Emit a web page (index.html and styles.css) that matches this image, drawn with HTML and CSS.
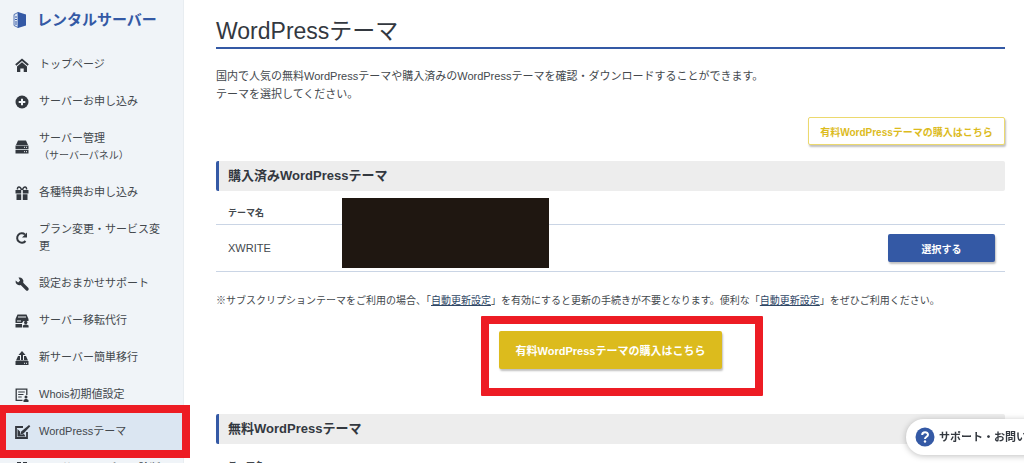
FILE: index.html
```html
<!DOCTYPE html>
<html lang="ja">
<head>
  <meta charset="UTF-8" />
  <meta name="viewport" content="width=device-width, initial-scale=1.0" />
  <title>WordPressテーマ</title>
  <link rel="stylesheet" href="styles.css">
</head>
<body>
  <div class="layout">
    <aside class="sidebar">
      <a class="logo" href="#">
        <svg width="14" height="16" viewBox="0 0 14 16"><path fill="#3459a5" d="M5 0l8 2.500v11L5 16z"/><path fill="#dfe8f5" stroke="#3459a5" stroke-width=".8" d="M1 2.500L5 .5v15l-4-2z"/><path stroke="#3459a5" d="M2 5h2M2 7.500h2M2 10h2M2 12h2"/></svg>
        <span>レンタルサーバー</span>
      </a>
      <nav class="menu">
        <a class="menu-item" href="#">
          <svg class="icon" viewBox="0 0 14 14"><path fill="none" stroke="currentColor" stroke-width="1.800" d="M.8 7L7 1.700 13.200 7"/><path fill="currentColor" d="M7 4.200l5 4.200V14H8.700v-3.500H5.300V14H2V8.400z"/></svg>
          <span>トップページ</span>
        </a>
        <a class="menu-item" href="#">
          <svg class="icon" viewBox="0 0 14 14"><circle cx="7" cy="7" r="6.500" fill="currentColor"/><path stroke="#f0f4f8" stroke-width="2" d="M7 3.700v6.600M3.700 7h6.600"/></svg>
          <span>サーバーお申し込み</span>
        </a>
        <a class="menu-item" href="#">
          <svg class="icon" viewBox="0 0 14 14"><path fill="currentColor" d="M3 .5h8l2 4.500H1zM.5 5.500h13v3.700H.5zM.5 10h13v3.500H.5z"/><path stroke="#f0f4f8" d="M9 7.300h1M11 7.300h1M9 11.700h1M11 11.700h1"/></svg>
          <span>サーバー管理<br><small>（サーバーパネル）</small></span>
        </a>
        <a class="menu-item" href="#">
          <svg class="icon" viewBox="0 0 14 14"><path fill="currentColor" d="M.5 4h5.700v3.500H.5zM7.800 4h5.700v3.500H7.800zM1.500 8.300h4.700V14H1.500zM7.800 8.300h4.700V14H7.800z"/><path fill="none" stroke="currentColor" stroke-width="1.500" d="M6.500 4C5.500 0 2 .3 2.500 3.500M7.500 4c1-4 4.500-3.700 4-.5"/></svg>
          <span>各種特典お申し込み</span>
        </a>
        <a class="menu-item" href="#">
          <svg class="icon" viewBox="0 0 14 14"><path fill="none" stroke="currentColor" stroke-width="2" d="M10 3.500A4.700 4.700 0 1 0 10.500 10"/><path fill="currentColor" d="M12 1.500v5H7z"/></svg>
          <span>プラン変更・サービス変更</span>
        </a>
        <a class="menu-item" href="#">
          <svg class="icon" viewBox="0 0 14 14"><path fill="currentColor" d="M3.500.6a4 4 0 0 1 4.700 5.200l5 5a1.600 1.600 0 0 1-2.300 2.400L5.700 8A4 4 0 0 1 .6 3.500l2.500 2 2-1.900z"/></svg>
          <span>設定おまかせサポート</span>
        </a>
        <a class="menu-item" href="#">
          <svg class="icon" viewBox="0 0 14 14"><path fill="currentColor" d="M2.500.5h9l2 4.500v2h-5L7 9H.5V5zM.5 10H7v3.500H.5z"/><path stroke="#f0f4f8" d="M3 3h8M2 7h4"/><circle cx="10.700" cy="8.500" r="1.700" fill="currentColor"/><path fill="currentColor" d="M7.800 13.500v-2l2-1h1.800l2 1v2z"/></svg>
          <span>サーバー移転代行</span>
        </a>
        <a class="menu-item" href="#">
          <svg class="icon" viewBox="0 0 14 14"><path fill="currentColor" d="M7 0l3.500 4H8v5H6V4H3.500zM3 5h2v5h4V5h2l2 4.500H1zM.5 10h13v4H.5z"/><path stroke="#f0f4f8" d="M9 12.300h1M11 12.300h1"/></svg>
          <span>新サーバー簡単移行</span>
        </a>
        <a class="menu-item" href="#">
          <svg class="icon" viewBox="0 0 14 14"><path fill="none" stroke="currentColor" stroke-width="1.300" d="M7.500 12.300H1.200V1.200h10.600V7"/><path stroke="currentColor" d="M3.200 4h6.600M3.200 6.500h5.300M3.200 9h3.500"/><circle cx="11" cy="9" r="1.500" fill="currentColor"/><path fill="currentColor" d="M8.500 14v-2l1.700-1h1.600l1.700 1v2z"/></svg>
          <span>Whois初期値設定</span>
        </a>
        <a class="menu-item active" href="#">
          <svg class="icon" viewBox="0 0 14 14"><path fill="none" stroke="currentColor" stroke-width="1.800" d="M8 2H1v11h11V7"/><path fill="currentColor" d="M14 0l1.300 1.300L8.500 8.500 5 10l1.200-3.500z"/><path fill="currentColor" d="M2.500 4L5 6.500V10l4-1 1.500 2.500h-8z"/></svg>
          <span>WordPressテーマ</span>
        </a>
        <a class="menu-item" href="#">
          <svg class="icon" viewBox="0 0 14 14"><path fill="currentColor" d="M2 0h4v6H2zM8 0h4v6H8zM1 7h12v6H1z"/></svg>
          <span>Webサイトスピード診断</span>
        </a>
      </nav>
    </aside>

    <main class="content">
      <h1>WordPressテーマ</h1>
      <p class="lead">国内で人気の無料WordPressテーマや購入済みのWordPressテーマを確認・ダウンロードすることができます。<br>テーマを選択してください。</p>
      <div class="buy-top">
        <button type="button" class="btn btn-outline">有料WordPressテーマの購入はこちら</button>
      </div>

      <h2>購入済みWordPressテーマ</h2>
      <div class="table-wrap">
        <table>
          <thead>
            <tr><th>テーマ名</th><th></th></tr>
          </thead>
          <tbody>
            <tr>
              <td>XWRITE</td>
              <td class="action"><button type="button" class="btn btn-blue">選択する</button></td>
            </tr>
          </tbody>
        </table>
        <div class="masked"></div>
      </div>
      <p class="note">※サブスクリプションテーマをご利用の場合、「<a href="#">自動更新設定</a>」を有効にすると更新の手続きが不要となります。便利な「<a href="#">自動更新設定</a>」をぜひご利用ください。</p>
      <div class="buy-main">
        <div class="highlight">
          <button type="button" class="btn btn-gold">有料WordPressテーマの購入はこちら</button>
        </div>
      </div>

      <h2>無料WordPressテーマ</h2>
      <table>
        <thead>
          <tr><th>テーマ名</th></tr>
        </thead>
      </table>
    </main>
  </div>

  <a class="support" href="#">
    <svg width="20" height="20" viewBox="0 0 20 20"><circle cx="10" cy="10" r="9.500" fill="#3459a5"/><path fill="none" stroke="#fff" stroke-width="2" d="M7.200 8c0-3.700 5.800-3.500 5.800-.3C13 9.700 10 9.800 10 12"/><circle cx="10" cy="14.500" r="1.200" fill="#fff"/></svg>
    <span>サポート・お問い合わせ</span>
  </a>
</body>
</html>
```
FILE: styles.css
```css
* {
  box-sizing: border-box;
}
body {
  margin: 0;
  height: 100vh;
  overflow: hidden;
  font-family: "Liberation Sans", "Noto Sans CJK JP", sans-serif;
  font-size: 11px;
  line-height: 18px;
  color: #43484d;
  background-color: #fff;
}
.layout {
  display: flex;
  min-height: 100vh;
}

/* sidebar */
.sidebar {
  flex: 0 0 184px;
  background-color: #f0f4f8;
  border-right: 1px solid #e8edf1;
}
.logo {
  display: flex;
  align-items: center;
  gap: 10px;
  height: 46px;
  padding: 0 0 7px 13px;
  color: #3459a5;
  font-size: 15px;
  font-weight: bold;
  text-decoration: none;
}
.menu-item {
  position: relative;
  display: flex;
  align-items: center;
  gap: 10px;
  padding: 10px 16px 10px 15px;
  color: #43484d;
  line-height: 17px;
  text-decoration: none;
}
.menu-item small {
  font-size: 10px;
}
.icon {
  flex: none;
  width: 14px;
  height: 14px;
  color: #33383f;
  overflow: visible;
}
.active {
  background-color: #dbe6f2;
}
.active::after {
  content: "";
  position: absolute;
  z-index: 2;
  inset: -8px -7px -8px -2px;
  border: 8px solid #ed1c24;
}

/* main column */
.content {
  flex: 1;
  min-width: 0;
  padding: 15px 19px 0 32px;
}
h1 {
  margin: 0;
  border-bottom: 2px solid #3459a5;
  color: #33383f;
  font-size: 23px;
  font-weight: normal;
  line-height: 32px;
}
.lead {
  margin: 18px 0 14px;
}
.buy-top {
  display: flex;
  justify-content: flex-end;
  margin-bottom: 16px;
}
h2 {
  margin: 0;
  padding-left: 9px;
  border-left: 3px solid #3459a5;
  border-radius: 2px;
  background-color: #ededed;
  color: #33383f;
  font-size: 13px;
  line-height: 30px;
}
.table-wrap {
  position: relative;
}
table {
  width: 100%;
  margin-top: 10px;
  border-collapse: separate;
  border-spacing: 0;
}
th,
td {
  padding: 0 12px;
  border-bottom: 1px solid #cad5e5;
  text-align: left;
}
th {
  height: 24px;
  font-size: 9px;
}
td {
  height: 47px;
}
td.action {
  padding-right: 10px;
  text-align: right;
}
.masked {
  position: absolute;
  top: -3px;
  left: 16%;
  width: 207px;
  height: 70px;
  background-color: #1f1711;
}
.note {
  margin: 20px 0 21px;
  font-size: 10px;
}
.note a {
  color: #2f4766;
}
.buy-main {
  display: flex;
  justify-content: center;
  margin-bottom: 45px;
}
.highlight {
  position: relative;
}
.highlight::after {
  content: "";
  position: absolute;
  inset: -15px -41px -27px -18px;
  border: 8px solid #ed1c24;
  border-radius: 1px;
  pointer-events: none;
}

/* buttons */
.btn {
  display: block;
  padding: 0;
  border: 0;
  border-radius: 2px;
  box-shadow: 1px 2px 2px rgba(0, 0, 0, 0.25);
  font-family: inherit;
  font-size: 10px;
  font-weight: bold;
  cursor: pointer;
}
.btn-outline {
  width: 197px;
  height: 28px;
  border: 1px solid #ecd96e;
  background-color: #fff;
  color: #dcbb1d;
}
.btn-blue {
  display: inline-block;
  width: 107px;
  height: 28px;
  vertical-align: middle;
  background-color: #3459a5;
  color: #fff;
}
.btn-gold {
  width: 223px;
  height: 38px;
  background-color: #dcbb1d;
  color: #fff;
  font-size: 11px;
}

/* floating support link */
.support {
  position: fixed;
  right: -50px;
  bottom: 8px;
  display: flex;
  align-items: center;
  gap: 4px;
  height: 36px;
  padding: 0 14px 0 9px;
  border-radius: 18px;
  background-color: #fff;
  box-shadow: 0 1px 6px rgba(0, 0, 0, 0.25);
  color: #33383f;
  font-weight: bold;
  text-decoration: none;
}
```
